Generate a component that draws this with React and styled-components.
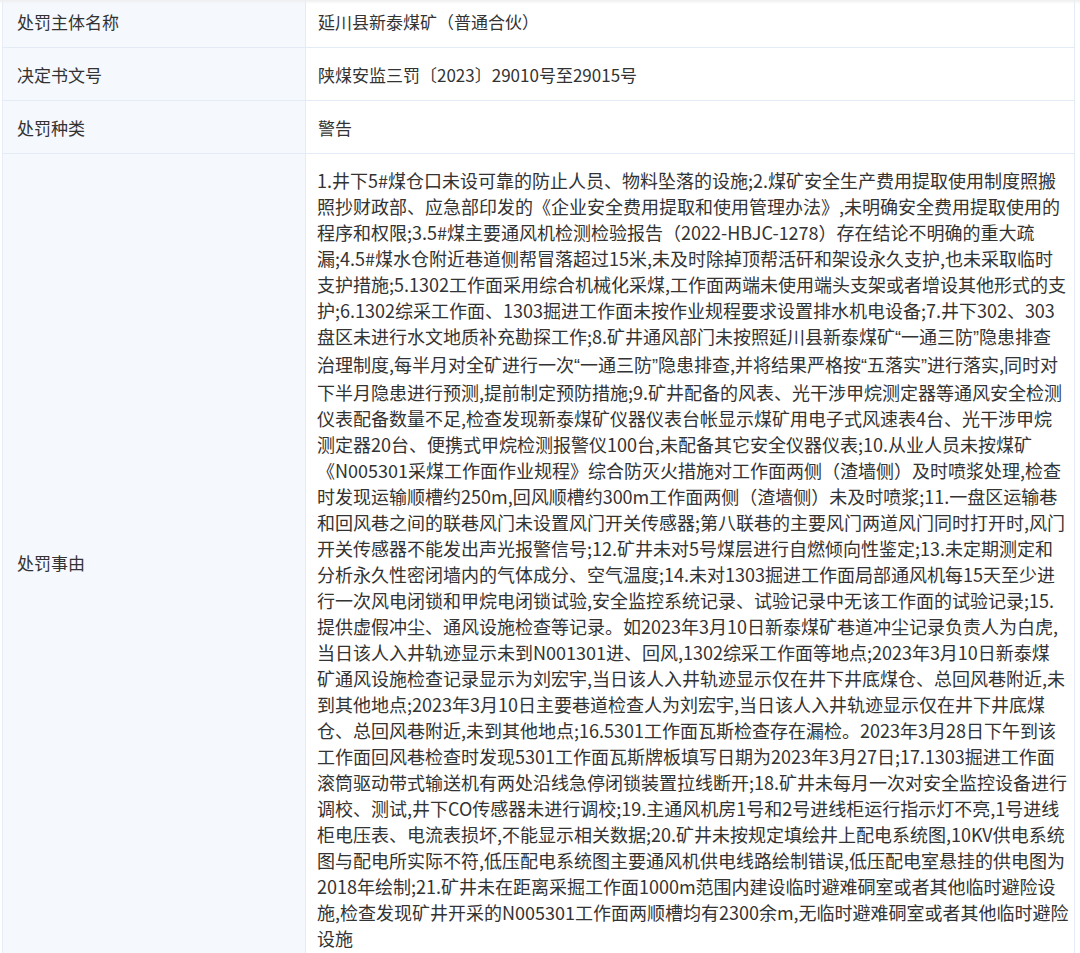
import React from 'react';
import styled, { createGlobalStyle } from 'styled-components';

const GlobalStyle = createGlobalStyle`
body {
    margin: 0;
    background: #fff;
    font-family: "PingFang SC", "Noto Sans CJK SC", "Noto Sans", sans-serif;
    color: #333;
    overflow: hidden;
}
`

const rows = [
    { label: '处罚主体名称', value: '延川县新泰煤矿（普通合伙）' },
    { label: '决定书文号', value: '陕煤安监三罚〔2023〕29010号至29015号' },
    { label: '处罚种类', value: '警告' },
];

const reasonLines = [
    '1.井下5#煤仓口未设可靠的防止人员、物料坠落的设施;2.煤矿安全生产费用提取使用制度照搬',
    '照抄财政部、应急部印发的《企业安全费用提取和使用管理办法》,未明确安全费用提取使用的',
    '程序和权限;3.5#煤主要通风机检测检验报告（2022-HBJC-1278）存在结论不明确的重大疏',
    '漏;4.5#煤水仓附近巷道侧帮冒落超过15米,未及时除掉顶帮活矸和架设永久支护,也未采取临时',
    '支护措施;5.1302工作面采用综合机械化采煤,工作面两端未使用端头支架或者增设其他形式的支',
    '护;6.1302综采工作面、1303掘进工作面未按作业规程要求设置排水机电设备;7.井下302、303',
    '盘区未进行水文地质补充勘探工作;8.矿井通风部门未按照延川县新泰煤矿“一通三防”隐患排查',
    '治理制度,每半月对全矿进行一次“一通三防”隐患排查,并将结果严格按“五落实”进行落实,同时对',
    '下半月隐患进行预测,提前制定预防措施;9.矿井配备的风表、光干涉甲烷测定器等通风安全检测',
    '仪表配备数量不足,检查发现新泰煤矿仪器仪表台帐显示煤矿用电子式风速表4台、光干涉甲烷',
    '测定器20台、便携式甲烷检测报警仪100台,未配备其它安全仪器仪表;10.从业人员未按煤矿',
    '《N005301采煤工作面作业规程》综合防灭火措施对工作面两侧（渣墙侧）及时喷浆处理,检查',
    '时发现运输顺槽约250m,回风顺槽约300m工作面两侧（渣墙侧）未及时喷浆;11.一盘区运输巷',
    '和回风巷之间的联巷风门未设置风门开关传感器;第八联巷的主要风门两道风门同时打开时,风门',
    '开关传感器不能发出声光报警信号;12.矿井未对5号煤层进行自燃倾向性鉴定;13.未定期测定和',
    '分析永久性密闭墙内的气体成分、空气温度;14.未对1303掘进工作面局部通风机每15天至少进',
    '行一次风电闭锁和甲烷电闭锁试验,安全监控系统记录、试验记录中无该工作面的试验记录;15.',
    '提供虚假冲尘、通风设施检查等记录。如2023年3月10日新泰煤矿巷道冲尘记录负责人为白虎,',
    '当日该人入井轨迹显示未到N001301进、回风,1302综采工作面等地点;2023年3月10日新泰煤',
    '矿通风设施检查记录显示为刘宏宇,当日该人入井轨迹显示仅在井下井底煤仓、总回风巷附近,未',
    '到其他地点;2023年3月10日主要巷道检查人为刘宏宇,当日该人入井轨迹显示仅在井下井底煤',
    '仓、总回风巷附近,未到其他地点;16.5301工作面瓦斯检查存在漏检。2023年3月28日下午到该',
    '工作面回风巷检查时发现5301工作面瓦斯牌板填写日期为2023年3月27日;17.1303掘进工作面',
    '滚筒驱动带式输送机有两处沿线急停闭锁装置拉线断开;18.矿井未每月一次对安全监控设备进行',
    '调校、测试,井下CO传感器未进行调校;19.主通风机房1号和2号进线柜运行指示灯不亮,1号进线',
    '柜电压表、电流表损坏,不能显示相关数据;20.矿井未按规定填绘井上配电系统图,10KV供电系统',
    '图与配电所实际不符,低压配电系统图主要通风机供电线路绘制错误,低压配电室悬挂的供电图为',
    '2018年绘制;21.矿井未在距离采掘工作面1000m范围内建设临时避难硐室或者其他临时避险设',
    '施,检查发现矿井开采的N005301工作面两顺槽均有2300余m,无临时避难硐室或者其他临时避险',
    '设施',
];

// curly quotes render half-width in the original, so give them a latin font
const renderLine = (line) =>
    line.split(/([“”])/).map((part, i) =>
        part === '“' || part === '”' ? <Quote key={i}>{part}</Quote> : part
    )

function App() {
    return (
        <Page>
            <GlobalStyle />
            <Table>
                {rows.map(row => (
                    <React.Fragment key={row.label}>
                        <Label>{row.label}</Label>
                        <Value>{row.value}</Value>
                    </React.Fragment>
                ))}
                <Label>处罚事由</Label>
                <Value tall>
                    {reasonLines.map((line, i) => <Line key={i}>{renderLine(line)}</Line>)}
                </Value>
            </Table>
        </Page>
    )
}

export default App;

//CSS//
const Page = styled.div`
position: relative;
height: 953px;
overflow: hidden;
padding-left: 2px;

&::before {
    content: '';
    position: absolute;
    top: 0;
    left: 0;
    right: 0;
    height: 4px;
    background: linear-gradient(#eeeeee, rgba(255,255,255,0));
    z-index: 2;
}
`

const Table = styled.div`
width: 1073px;
margin-top: -5px;
display: grid;
grid-template-columns: 303px 1fr;
border-left: 1px solid #e6edf8;
border-right: 1px solid #e3ebf7;
box-sizing: border-box;
`

const Label = styled.div`
background-color: #f5f8fd;
border-right: 1px solid #e3ebf7;
border-bottom: 1px solid #e3ebf7;
min-height: 52px;
padding-left: 14px;
display: flex;
align-items: center;
font-size: 17px;
color: #333;
`

const Value = styled.div`
border-bottom: 1px solid #e3ebf7;
min-height: 52px;
padding: ${props => props.tall ? '13px 0 20px 11px' : '0 0 0 12px'};
display: ${props => props.tall ? 'block' : 'flex'};
align-items: center;
font-size: 17px;
color: #333;
overflow: hidden;
`

const Line = styled.div`
font-size: 18px;
line-height: 26px;
white-space: nowrap;
`

const Quote = styled.span`
font-family: "Liberation Sans", sans-serif;
`
